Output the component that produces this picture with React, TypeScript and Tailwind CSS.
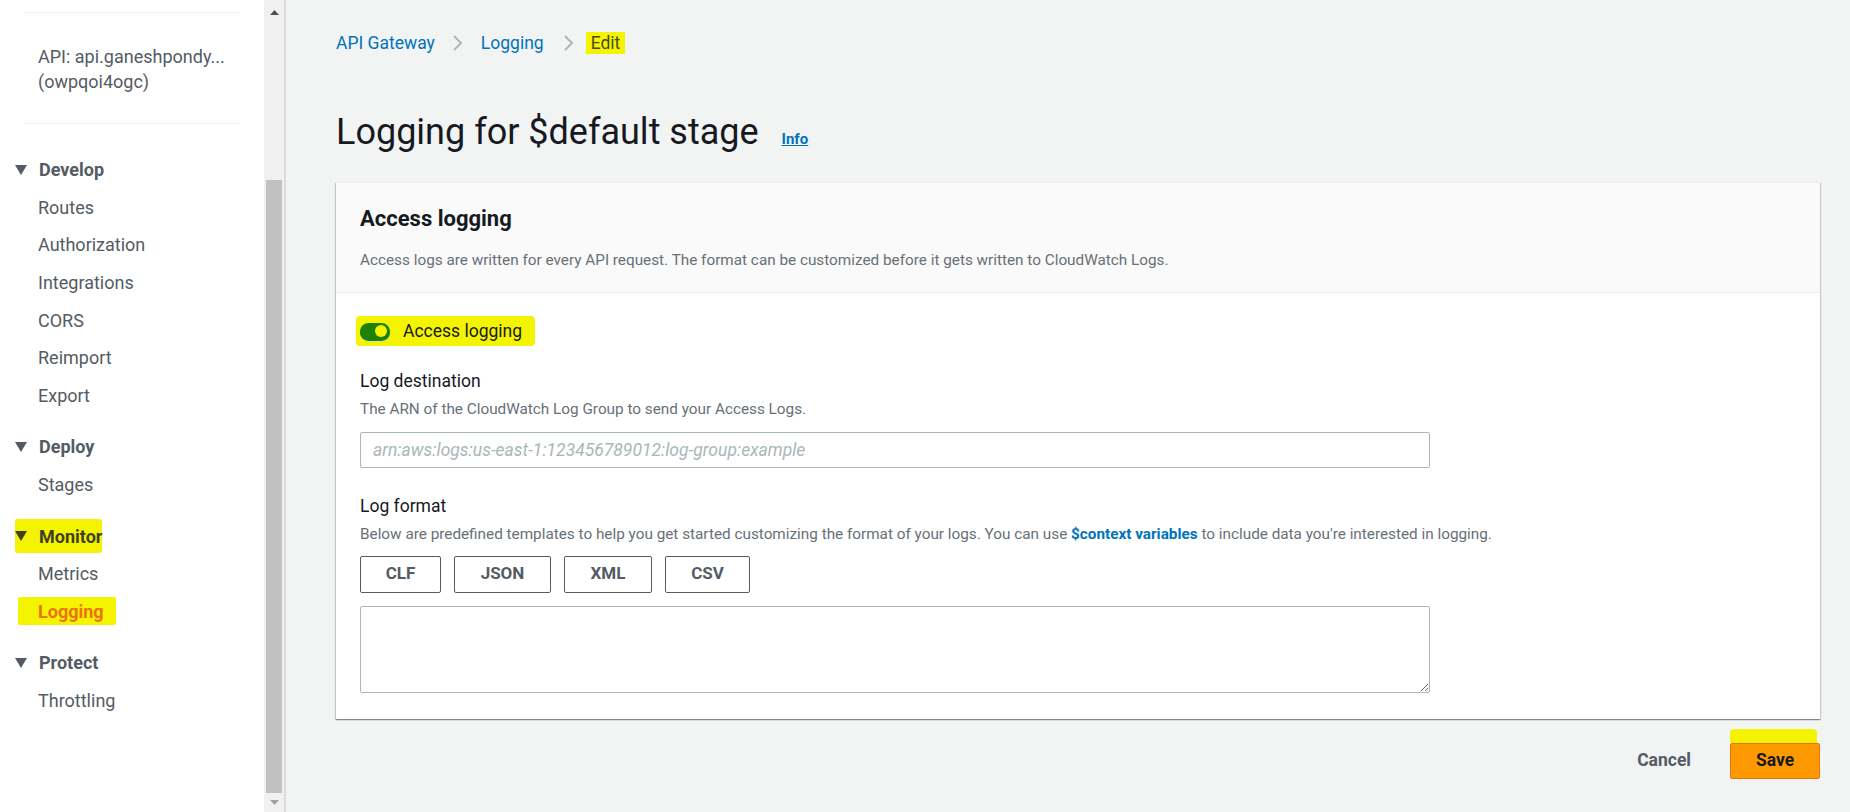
import { useState } from 'react';

const sections = [
  { title: 'Develop', items: ['Routes', 'Authorization', 'Integrations', 'CORS', 'Reimport', 'Export'] },
  { title: 'Deploy', items: ['Stages'] },
  { title: 'Monitor', items: ['Metrics', 'Logging'] },
  { title: 'Protect', items: ['Throttling'] },
];

const templates = [
  { id: 'CLF', width: 'w-[81px]' },
  { id: 'JSON', width: 'w-[97px]' },
  { id: 'XML', width: 'w-[88px]' },
  { id: 'CSV', width: 'w-[85px]' },
];

function Caret() {
  return (
    <svg width="12" height="10" viewBox="0 0 12 10" className="shrink-0">
      <polygon points="0,0 12,0 6,10" fill="currentColor" />
    </svg>
  );
}

function Chevron() {
  return (
    <svg width="12" height="16" viewBox="0 0 12 16" className="shrink-0">
      <path d="M2 1 L9 8 L2 15" fill="none" stroke="#aab7b8" strokeWidth="2" />
    </svg>
  );
}

function Sidebar() {
  return (
    <aside className="w-[264px] shrink-0 bg-white pt-[12px] text-[#545b64]">
      <div className="mx-[24px] border-t border-[#eaeded]" />
      <div className="pl-[38px] pt-[31px] pb-[29px] text-[18px] leading-[25px]">
        <div>API: api.ganeshpondy...</div>
        <div>(owpqoi4ogc)</div>
      </div>
      <div className="mx-[24px] border-t border-[#eaeded]" />
      <nav className="mt-[27px] text-[18px]">
        {sections.map((section, i) => (
          <div key={section.title} className={i > 0 ? 'mt-[14px]' : ''}>
            <div className="flex h-[37.6px] items-center pl-[15px]">
              {section.title === 'Monitor' ? (
                <span className="flex h-[34px] items-center gap-[12px] rounded-[3px] bg-[#f4f400] text-[#3f4020]">
                  <Caret />
                  <span className="font-bold">{section.title}</span>
                </span>
              ) : (
                <span className="flex items-center gap-[12px]">
                  <Caret />
                  <span className="font-bold">{section.title}</span>
                </span>
              )}
            </div>
            {section.items.map((item) => (
              <div key={item} className="flex h-[37.6px] items-center pl-[38px]">
                {item === 'Logging' && section.title === 'Monitor' ? (
                  <span className="-ml-[20px] flex h-[28px] items-center rounded-[2px] bg-[#f4f400] pl-[20px] pr-[12px] font-bold text-[#ec7211]">
                    {item}
                  </span>
                ) : (
                  <span>{item}</span>
                )}
              </div>
            ))}
          </div>
        ))}
      </nav>
    </aside>
  );
}

function Scrollbar() {
  return (
    <div className="flex w-[22px] shrink-0 flex-col border-r-2 border-[#dcdcdc] bg-[#f0f0f0]">
      <div className="flex h-[24px] items-center justify-center">
        <svg width="9" height="5" viewBox="0 0 9 5">
          <polygon points="0,5 9,5 4.5,0" fill="#505050" />
        </svg>
      </div>
      <div className="h-[156px]" />
      <div className="mx-[2px] flex-1 bg-[#c1c1c1]" />
      <div className="flex h-[19px] items-center justify-center">
        <svg width="9" height="5" viewBox="0 0 9 5">
          <polygon points="0,0 9,0 4.5,5" fill="#a0a0a0" />
        </svg>
      </div>
    </div>
  );
}

export default function App() {
  const [enabled, setEnabled] = useState(true);

  return (
    <div className="flex h-[812px] w-[1850px] overflow-hidden font-['Roboto','Liberation_Sans',sans-serif]">
      <Sidebar />
      <Scrollbar />
      <main className="flex-1 bg-[#f2f3f3] pl-[50px] pr-[30px] pt-[31px] text-[#16191f]">
        <div className="flex h-[24px] items-center text-[17.5px]">
          <a className="text-[#0073bb]">API Gateway</a>
          <span className="ml-[17px] mr-[17px] flex"><Chevron /></span>
          <a className="text-[#0073bb]">Logging</a>
          <span className="ml-[19px] mr-[11px] flex"><Chevron /></span>
          <span className="flex h-[22px] items-center bg-[#f4f400] px-[5px] text-[#4a4b22]">Edit</span>
        </div>

        <div className="mt-[55px] flex h-[44px] items-baseline">
          <h1 className="text-[36px] leading-[44px] font-normal">Logging for $default stage</h1>
          <a className="ml-[23px] text-[15px] font-bold text-[#0073bb] underline">Info</a>
        </div>

        <section className="mt-[28px] border-t border-[#eaeded] bg-white shadow-[0_1px_1px_0_rgba(0,28,36,0.3),1px_1px_1px_0_rgba(0,28,36,0.15),-1px_1px_1px_0_rgba(0,28,36,0.15)]">
          <header className="border-b border-[#eaeded] bg-[#fafafa] px-[24px] pt-[22px] pb-[21px]">
            <h2 className="text-[22px] leading-[28px] font-bold">Access logging</h2>
            <p className="mt-[16px] text-[15.3px] leading-[22px] text-[#687078]">
              Access logs are written for every API request. The format can be customized before it gets written to CloudWatch Logs.
            </p>
          </header>

          <div className="px-[24px] pt-[23px] pb-[26px]">
            <div className="-ml-[4px] inline-flex h-[30px] items-center gap-[13px] rounded-[4px] bg-[#f4f400] pl-[4px] pr-[13px]">
              <button
                onClick={() => setEnabled(!enabled)}
                className="relative h-[17px] w-[30px] rounded-full bg-[#1d8102] shadow-[0_1px_0_0_#0073bb]"
              >
                <span className="absolute right-[3px] top-[2.5px] h-[12px] w-[12px] rounded-full bg-[#f4f400]" />
              </button>
              <span className="text-[17.5px]">Access logging</span>
            </div>

            <div className="mt-[22px] text-[17.5px] leading-[24px]">Log destination</div>
            <p className="mt-[5px] text-[15.3px] leading-[22px] text-[#687078]">
              The ARN of the CloudWatch Log Group to send your Access Logs.
            </p>
            <input
              placeholder="arn:aws:logs:us-east-1:123456789012:log-group:example"
              className="mt-[12px] h-[36px] w-[1070px] rounded-[2px] border border-[#aab7b8] bg-white px-[12px] text-[17.5px] placeholder:italic placeholder:text-[#aab7b8]"
            />

            <div className="mt-[26px] text-[17.5px] leading-[24px]">Log format</div>
            <p className="mt-[5px] text-[15.3px] leading-[22px] text-[#687078]">
              Below are predefined templates to help you get started customizing the format of your logs. You can use{' '}
              <a className="font-bold text-[#0073bb]">$context variables</a> to include data you're interested in logging.
            </p>
            <div className="mt-[11px] flex gap-[13px]">
              {templates.map((t) => (
                <button
                  key={t.id}
                  className={`${t.width} h-[37px] rounded-[2px] border border-[#545b64] bg-white text-[17px] font-bold text-[#545b64]`}
                >
                  {t.id}
                </button>
              ))}
            </div>
            <textarea className="mt-[13px] block h-[87px] w-[1070px] rounded-[2px] border border-[#aab7b8] bg-white" />
          </div>
        </section>

        <div className="mt-[10px] flex items-end justify-end">
          <button className="mr-[39px] h-[36px] text-[17.5px] font-bold text-[#545b64]">Cancel</button>
          <div className="flex flex-col items-start">
            <div className="h-[14px] w-[87px] rounded-t-[4px] bg-[#f4f400]" />
            <button className="h-[36px] w-[90px] rounded-[2px] border border-[#ec7211] bg-[#ff9900] text-[17.5px] font-bold text-[#16191f]">
              Save
            </button>
          </div>
        </div>
      </main>
    </div>
  );
}
